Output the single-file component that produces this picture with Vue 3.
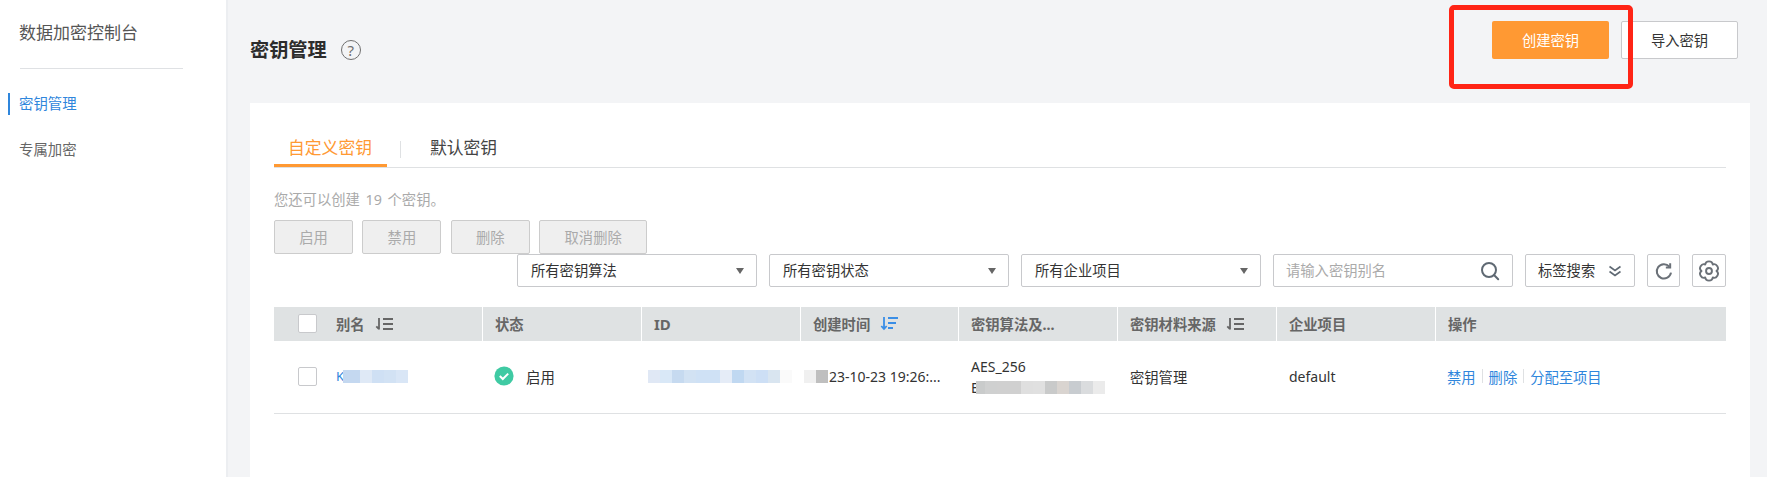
<script setup>
const disabledBtns = ['启用', '禁用', '删除', '取消删除']
const filters = ['所有密钥算法', '所有密钥状态', '所有企业项目']
const aliasBlur = ['#c4d8f0', '#dfe9f6', '#cfe0f4', '#d2e2f4', '#d9e6f6']
const idBlur = ['#e0e8f5', '#d9e8f7', '#c6daf0', '#d2e2f3', '#cfe1f5', '#cfe1f5', '#e5ecf7', '#c0d8f1', '#d2e2f4', '#cddff5', '#d9e5f0', '#fafafa', '#ffffff']
const timeBlur = ['#f0f0f0', '#bfbfbf']
const algoBlur = ['#c9cbcb', '#cfd0d0', '#d0d0d0', '#d0d0d0', '#dfdfdf', '#e0e0e0', '#c9caca', '#d9d4d0', '#c8ccd0', '#dadcde', '#ebebeb']

const cogPath = (() => {
  const pol = (deg, r) => {
    const a = (deg * Math.PI) / 180
    return `${(12 + r * Math.cos(a)).toFixed(2)} ${(12 + r * Math.sin(a)).toFixed(2)}`
  }
  let d = 'M' + pol(-120, 8.2)
  for (let i = 0; i < 6; i++) {
    const c = -90 + i * 60
    d += `C${pol(c - 17, 12.2)} ${pol(c + 17, 12.2)} ${pol(c + 30, 8.2)}`
  }
  return d + 'Z'
})()
</script>

<template>
  <div class="page">
    <aside class="side">
      <div class="side-title">数据加密控制台</div>
      <div class="side-rule"></div>
      <div class="nav active">密钥管理</div>
      <div class="nav">专属加密</div>
    </aside>

    <main class="main">
      <header class="head">
        <div class="title-wrap">
          <h1 class="title">密钥管理</h1>
          <span class="help">?</span>
        </div>
        <div class="head-btns">
          <button class="btn-create">创建密钥</button>
          <button class="btn-import">导入密钥</button>
        </div>
      </header>

      <section class="card">
        <div class="tabs">
          <div class="tab tab-on">自定义密钥</div>
          <span class="tab-sep"></span>
          <div class="tab tab-off">默认密钥</div>
        </div>

        <p class="note">您还可以创建 19 个密钥。</p>

        <div class="bulk">
          <button v-for="b in disabledBtns" :key="b" class="btn-dis" :class="{ wide: b.length > 2 }">{{ b }}</button>
        </div>

        <div class="filters">
          <div v-for="f in filters" :key="f" class="select">
            <span>{{ f }}</span><i class="caret"></i>
          </div>
          <div class="search">
            <span>请输入密钥别名</span>
            <svg width="20" height="20" viewBox="0 0 20 20" fill="none" stroke="#5f6973" stroke-width="2">
              <circle cx="9" cy="9" r="7" /><path d="M14 14l4.2 4.2" stroke-linecap="round" />
            </svg>
          </div>
          <div class="tagsearch">
            <span>标签搜索</span>
            <svg width="14" height="14" viewBox="0 0 14 14" fill="none" stroke="#5f6973" stroke-width="1.6">
              <path d="M1.5 2.5l5.5 4 5.5-4M1.5 7.5l5.5 4 5.5-4" />
            </svg>
          </div>
          <div class="iconbtn refresh">
            <svg width="20" height="20" viewBox="0 0 24 24" fill="none" stroke="#6b7178" stroke-width="2.4">
              <path d="M18.4 6.8A8.6 8.6 0 1 0 20.4 14" /><path d="M19.4 2.6v5.2h-5.2" />
            </svg>
          </div>
          <div class="iconbtn">
            <svg width="22" height="22" viewBox="0 0 24 24" fill="none" stroke="#6b7178" stroke-width="2.1" stroke-linejoin="round">
              <path :d="cogPath" /><circle cx="12" cy="12" r="3.2" />
            </svg>
          </div>
        </div>

        <div class="table">
          <div class="row thead">
            <div class="cell c-alias">
              <span class="check"></span>
              <span>别名</span>
              <svg class="sort" width="19" height="14" viewBox="0 0 19 14" fill="none" stroke="#666" stroke-width="1.8">
                <path d="M4 1v11.5M1.3 9.3L4 12.2M8 2h10M8 7h10M8 12h10" />
              </svg>
            </div>
            <div class="cell">状态</div>
            <div class="cell id-h">ID</div>
            <div class="cell">
              <span>创建时间</span>
              <svg class="sort" width="19" height="15" viewBox="0 0 19 15" fill="none" stroke="#3a8ee6" stroke-width="1.8">
                <path d="M4 1v12M1.3 10L4 13l2.7-3M8 2h10M8 7h8M8 12h5" />
              </svg>
            </div>
            <div class="cell">密钥算法及...</div>
            <div class="cell">
              <span>密钥材料来源</span>
              <svg class="sort" width="19" height="14" viewBox="0 0 19 14" fill="none" stroke="#666" stroke-width="1.8">
                <path d="M4 1v11.5M1.3 9.3L4 12.2M8 2h10M8 7h10M8 12h10" />
              </svg>
            </div>
            <div class="cell">企业项目</div>
            <div class="cell last">操作</div>
          </div>

          <div class="row tbody">
            <div class="cell c-alias">
              <span class="check"></span>
              <span class="alias"><span class="k">K</span><span class="blur alias-blur"><i v-for="(c, i) in aliasBlur" :key="i" :style="{ background: c }"></i></span></span>
            </div>
            <div class="cell status">
              <svg width="20" height="20" viewBox="0 0 20 20">
                <circle cx="10" cy="10" r="9.6" fill="#3fcaa3" />
                <path d="M5.8 10l3 3 5.4-5.4" fill="none" stroke="#fff" stroke-width="2" />
              </svg>
              <span>启用</span>
            </div>
            <div class="cell id-c">
              <span class="blur"><i v-for="(c, i) in idBlur" :key="i" :style="{ background: c }"></i></span>
            </div>
            <div class="cell time">
              <span class="blur time-blur"><i v-for="(c, i) in timeBlur" :key="i" :style="{ background: c }"></i></span>
              <span class="latin">23-10-23 19:26:...</span>
            </div>
            <div class="cell algo">
              <div class="latin">AES_256</div>
              <div class="algo2 latin"><span>E</span><span class="blur algo-blur"><i v-for="(c, i) in algoBlur" :key="i" :style="{ background: c }"></i></span></div>
            </div>
            <div class="cell">密钥管理</div>
            <div class="cell latin">default</div>
            <div class="cell last ops">
              <a>禁用</a><b></b><a>删除</a><b></b><a>分配至项目</a>
            </div>
          </div>
        </div>
      </section>
    </main>

    <div class="redbox"></div>
  </div>
</template>

<style>
html, body { margin: 0; background: #f3f4f6; }
</style>

<style scoped>
.page {
  position: relative;
  display: flex;
  width: 1767px;
  height: 477px;
  overflow: hidden;
  background: #f3f4f6;
  font-family: "Noto Sans", "Noto Sans CJK SC", sans-serif;
  font-size: 14.3px;
  color: #252b3a;
}
.side {
  width: 228px;
  flex: none;
  box-sizing: border-box;
  background: #fff;
  border-right: 2px solid #eceef1;
  padding-top: 21px;
}
.side-title { margin-left: 19px; font-size: 17px; line-height: 24px; color: #555; }
.side-rule { width: 163px; height: 1px; margin: 23px 0 24px 20px; background: #dfe1e4; }
.nav { height: 22px; line-height: 21px; margin-bottom: 24px; padding-left: 19px; font-size: 14.4px; color: #666; }
.nav.active { color: #2f86dc; margin-left: 8px; border-left: 2px solid #2f86dc; padding-left: 9px; }

.main { flex: 1; min-width: 0; padding: 21px 17px 0 22px; box-sizing: border-box; }
.head { display: flex; justify-content: space-between; height: 38px; padding-right: 12px; }
.title-wrap { display: flex; align-items: center; height: 38px; margin-top: 10px; }
.title { margin: 0; font-size: 19.2px; font-weight: 700; line-height: 26px; color: #2c2c2c; }
.help {
  width: 18px; height: 18px; margin-left: 14px;
  border: 1.6px solid #6f6f6f; border-radius: 50%;
  font-size: 15px; line-height: 18px; text-align: center; color: #6f6f6f;
}
.head-btns { display: flex; gap: 12px; }
.head-btns button {
  width: 117px; height: 38px; padding: 0 0 2px;
  border-radius: 2px; font: inherit; font-size: 14.3px; cursor: pointer;
}
.btn-create { border: 0; background: #ff9933; color: #fff; }
.btn-import { border: 1px solid #c8c9cc; background: #fff; color: #333; }

.card { margin-top: 44px; height: 374px; padding: 0 24px; background: #fff; box-sizing: border-box; }
.tabs {
  display: flex; align-items: flex-start; height: 33px; padding-top: 31px;
  border-bottom: 1px solid #dfe1e3;
  box-sizing: content-box;
}
.tab { font-size: 16.8px; line-height: 27px; height: 31px; }
.tab-on {
  width: 113px; height: 33px; box-sizing: border-box; text-align: center; padding-right: 1px;
  border-bottom: 3px solid #ff9933; color: #ff9933;
}
.tab-sep { width: 1px; height: 17px; margin: 7px 29px 0 13px; background: #dfe1e3; }
.tab-off { color: #444; }

.note { margin: 22px 0 0; font-size: 14.3px; line-height: 20px; color: #aaa; word-spacing: 2px; }
.bulk { display: flex; gap: 9.4px; margin-top: 10px; }
.btn-dis {
  width: 79px; height: 34px; padding: 0 0 1px; box-sizing: border-box;
  border: 1px solid #ccc; border-radius: 2px; background: #efefef;
  font: inherit; font-size: 14.3px; color: #aaa;
}
.btn-dis.wide { width: 108px; }

.filters { display: flex; justify-content: flex-end; height: 33px; gap: 12px; }
.select, .search, .tagsearch, .iconbtn {
  box-sizing: border-box; display: flex; align-items: center; justify-content: space-between;
  height: 33px; background: #fff; border: 1px solid #c8c9cc; border-radius: 2px;
  font-size: 14.3px;
}
.select > span, .search > span, .tagsearch > span { margin-top: -2px; }
.select { width: 240px; padding: 0 12px 0 13px; color: #333; }
.caret { width: 0; height: 0; border-left: 4.5px solid transparent; border-right: 4.5px solid transparent; border-top: 6px solid #666; }
.search { width: 240px; padding: 0 12px; color: #aaa; }
.tagsearch { width: 110px; padding: 0 12px 0 12px; color: #333; }
.iconbtn { width: 33px; justify-content: center; }
.iconbtn + .iconbtn { width: 34px; }

.table { margin-top: 20px; }
.row { display: grid; grid-template-columns: 209px 159px 159px 158px 159px 159px 159px 290px; }
.thead { height: 34px; background: #dfe2e3; font-size: 14.3px; font-weight: 700; color: #666; }
.thead .cell { padding-bottom: 1px; }
.tbody { height: 73px; box-sizing: border-box; border-bottom: 1px solid #dfe1e3; font-size: 14.3px; color: #333; }
.tbody .cell { padding-bottom: 2px; }
.cell { display: flex; align-items: center; padding-left: 12px; box-sizing: border-box; white-space: nowrap; }
.thead .cell { border-right: 1px solid #fff; }
.thead .cell.last { border-right: 0; }
.c-alias { padding-left: 24px; }
.check {
  width: 19px; height: 19px; box-sizing: border-box; margin-right: 19px;
  border: 1px solid #c8c9cc; border-radius: 2px; background: #fff;
}
.sort { margin-left: 10px; }
.id-h { font-size: 15px; }

.alias { display: flex; align-items: center; color: #2f86dc; }
.k { font-size: 13px; width: 7px; overflow: hidden; }
.blur { display: inline-flex; height: 13px; }
.blur i { width: 12px; height: 13px; display: block; }
.alias-blur i:first-child { width: 17px; }
.id-c { padding-left: 6px; }
.tbody .status { padding-left: 11px; }
.status svg { margin-right: 12px; }
.status span { font-size: 14.4px; }
.time { padding-left: 3px; }
.time-blur { width: 25px; }
.latin { font-size: 14px; letter-spacing: 0; }
.tbody .algo { display: block; padding-top: 15px; padding-bottom: 0; }
.algo > div { height: 21px; line-height: 21px; }
.algo2 { display: flex; align-items: center; }
.algo-blur i { width: 12px; }
.algo-blur i:first-child { width: 9px; }
.algo-blur { margin-left: -3px; }
.tbody .ops { padding-left: 11px; }
.ops a { color: #2f86dc; font-size: 14.3px; }
.ops b { width: 1px; height: 14px; margin: 0 6px; background: #dfe1e3; }

.redbox {
  position: absolute;
  left: 1449px; top: 5px;
  width: 184px; height: 84px;
  box-sizing: border-box;
  border: 5px solid #ff2415;
  border-radius: 5px;
  pointer-events: none;
}
</style>
